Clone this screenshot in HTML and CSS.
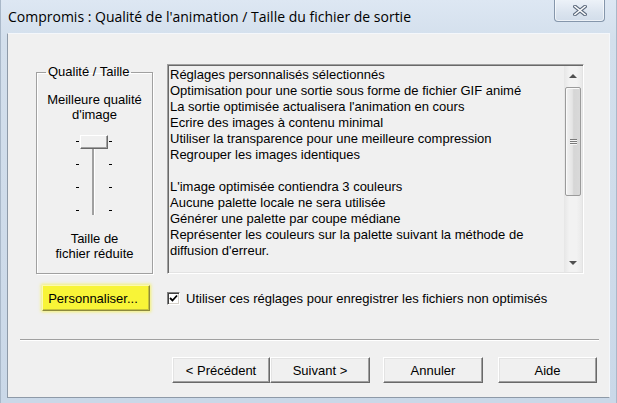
FILE: index.html
```html
<!DOCTYPE html>
<html lang="fr">
<head>
  <meta charset="UTF-8">
  <title>Compromis</title>
  <link rel="stylesheet" href="styles.css">
</head>
<body>
  <div class="window">
    <div class="titlebar">
      <span class="title">Compromis : Qualité de l'animation / Taille du fichier de sortie</span>
      <span class="close">
        <svg width="14" height="11" viewBox="0 0 14 11">
          <path d="M2 1.5 L12 9.5 M12 1.5 L2 9.5" stroke="#5d6b7e" stroke-width="3.6" stroke-linecap="square"/>
          <path d="M2 1.5 L12 9.5 M12 1.5 L2 9.5" stroke="#ffffff" stroke-width="1.6" stroke-linecap="square"/>
        </svg>
      </span>
    </div>

    <div class="client">
      <div class="top">
        <fieldset class="group">
          <legend>Qualité / Taille</legend>
          <p class="slider-label">Meilleure qualité<br>d'image</p>
          <div class="slider">
            <div class="ticks">
              <span></span><span></span><span></span><span></span>
            </div>
            <div class="track"></div>
            <div class="ticks">
              <span></span><span></span><span></span><span></span>
            </div>
            <div class="thumb"></div>
          </div>
          <p class="slider-label bottom">Taille de<br>fichier réduite</p>
        </fieldset>

        <div class="report">
          <div class="report-text">
            <div>Réglages personnalisés sélectionnés</div>
            <div>Optimisation pour une sortie sous forme de fichier GIF animé</div>
            <div>La sortie optimisée actualisera l'animation en cours</div>
            <div>Ecrire des images à contenu minimal</div>
            <div>Utiliser la transparence pour une meilleure compression</div>
            <div>Regrouper les images identiques</div>
            <div>&nbsp;</div>
            <div>L'image optimisée contiendra 3 couleurs</div>
            <div>Aucune palette locale ne sera utilisée</div>
            <div>Générer une palette par coupe médiane</div>
            <div>Représenter les couleurs sur la palette suivant la méthode de</div>
            <div>diffusion d'erreur.</div>
          </div>
          <div class="scrollbar">
            <div class="arrow"><span class="tri up"></span></div>
            <div class="sb-thumb">
              <span class="grip"></span>
            </div>
            <div class="sb-space"></div>
            <div class="arrow"><span class="tri down"></span></div>
          </div>
        </div>
      </div>

      <div class="options">
        <button class="btn btn-custom">Personnaliser...</button>
        <label class="check">
          <span class="box">
            <svg width="9" height="9" viewBox="0 0 9 9">
              <path d="M1 4 L3.5 6.5 L8 1.5" fill="none" stroke="#000" stroke-width="1.8"/>
            </svg>
          </span>
          Utiliser ces réglages pour enregistrer les fichiers non optimisés
        </label>
      </div>

      <div class="sep"></div>

      <div class="actions">
        <button class="btn btn-prev">&lt; Précédent</button>
        <button class="btn btn-next">Suivant &gt;</button>
        <button class="btn btn-cancel">Annuler</button>
        <button class="btn btn-help">Aide</button>
      </div>
    </div>
  </div>
</body>
</html>
```

FILE: styles.css
```css
* {
  box-sizing: border-box;
}

body {
  margin: 0;
  background-color: #cfdcea;
  font-family: 'Liberation Sans', Arial, sans-serif;
  font-size: 13px;
  color: #000000;
}

.window {
  width: 617px;
  height: 403px;
  background: linear-gradient(to bottom, #dde7f3 0px, #d3dfec 40px, #cad8e8 100%);
  border-left: 1px solid #a9b8c9;
  border-right: 1px solid #a9b8c9;
}

.titlebar {
  height: 33px;
  display: flex;
  justify-content: space-between;
  align-items: flex-start;
  padding-left: 7px;
}

.title {
  font-family: 'Open Sans', 'Noto Sans', sans-serif;
  font-size: 14px;
  line-height: 19px;
  margin-top: 7px;
  color: #000000;
}

.close {
  width: 51px;
  height: 23px;
  margin-right: 11px;
  margin-top: -1px;
  border: 1px solid #8596ab;
  border-top: none;
  border-radius: 0 0 4px 4px;
  background: linear-gradient(to bottom, #eef3f9, #dbe4ef 60%, #d2ddea);
  box-shadow: inset 0 0 0 1px rgba(255, 255, 255, 0.6);
  display: flex;
  align-items: center;
  justify-content: center;
}

.client {
  margin-left: 6px;
  width: 603px;
  height: 365px;
  background-color: #f0f0f0;
  border: 1px solid #8e9aa8;
  border-top-color: #f4f7fb;
  border-right-color: #f4f7fb;
}

.top {
  display: flex;
  align-items: flex-start;
  padding-top: 30px;
}

.group {
  margin: 0 0 0 28px;
  padding: 0;
  width: 117px;
  height: 210px;
  border: 1px solid #a0a0a0;
  box-shadow: inset 1px 1px 0 #ffffff, 1px 1px 0 #ffffff;
  display: flex;
  flex-direction: column;
  align-items: center;
}

.group legend {
  margin-left: 9px;
  padding: 0 2px;
  line-height: 16px;
}

.slider-label {
  margin: 12px 0 0;
  line-height: 15px;
  text-align: center;
}

.slider-label.bottom {
  margin-top: 16px;
}

.slider {
  position: relative;
  margin-top: 13px;
  margin-right: 2px;
  width: 36px;
  height: 80px;
  display: flex;
  justify-content: space-between;
}

.ticks {
  display: flex;
  flex-direction: column;
  gap: 22px;
  padding-top: 6px;
}

.ticks span {
  display: block;
  width: 3px;
  height: 1px;
  background-color: #000000;
}

.track {
  margin-top: 7px;
  width: 3px;
  height: 73px;
  background-color: #a0a0a0;
  border-right: 1px solid #ffffff;
}

.thumb {
  position: absolute;
  left: 4px;
  top: 0;
  width: 28px;
  height: 14px;
  background-color: #f0f0f0;
  border: 1px solid;
  border-color: #ffffff #696969 #696969 #ffffff;
  box-shadow: inset -1px -1px 0 #a0a0a0;
}

.report {
  margin-left: 14px;
  width: 417px;
  height: 210px;
  padding: 1px;
  display: flex;
  border: 1px solid;
  border-color: #a0a0a0 #ffffff #ffffff #a0a0a0;
  box-shadow: inset 1px 1px 0 #696969, inset -1px -1px 0 #e3e3e3;
}

.report-text {
  flex: 1;
  padding: 1px 0 0 1px;
  line-height: 16px;
  overflow: hidden;
  white-space: nowrap;
}

.scrollbar {
  width: 18px;
  display: flex;
  flex-direction: column;
  background: linear-gradient(to right, #e6e6e6, #f2f2f2 30%, #f2f2f2 70%, #e9e9e9);
}

.arrow {
  height: 19px;
  display: flex;
  align-items: center;
  justify-content: center;
}

.tri {
  width: 0;
  height: 0;
  border-left: 4px solid transparent;
  border-right: 4px solid transparent;
}

.tri.up {
  border-bottom: 4px solid #505050;
}

.tri.down {
  border-top: 4px solid #505050;
}

.sb-thumb {
  margin: 2px 1px 0;
  height: 109px;
  border: 1px solid #9b9b9b;
  border-radius: 2px;
  background: linear-gradient(to right, #f2f2f2, #e4e4e4 45%, #d6d6d6 55%, #d9d9d9);
  box-shadow: inset 1px 1px 0 #fafafa;
  display: flex;
  align-items: center;
  justify-content: center;
}

.grip {
  width: 7px;
  height: 6px;
  background: repeating-linear-gradient(to bottom, #7a7a7a 0, #7a7a7a 1px, #f6f6f6 1px, #f6f6f6 2px);
}

.sb-space {
  flex: 1;
}

.options {
  margin-top: 11px;
  display: flex;
  align-items: center;
}

.btn {
  height: 26px;
  padding: 0;
  font-family: 'Liberation Sans', Arial, sans-serif;
  font-size: 13px;
  color: #000000;
  background-color: #f0f0f0;
  border: 1px solid;
  border-color: #ffffff #696969 #696969 #ffffff;
  box-shadow: inset -1px -1px 0 #a0a0a0, inset 1px 1px 0 #e3e3e3;
}

.btn-custom {
  margin-left: 34px;
  width: 108px;
  padding-right: 6px;
  background-color: #f8f437;
  border-color: #fbf9b0 #8d8a3c #8d8a3c #fbf9b0;
  box-shadow: inset -1px -1px 0 #c4c03a, 0 0 3px 1px rgba(246, 242, 70, 0.75);
}

.check {
  margin-left: 17px;
  display: flex;
  align-items: center;
  gap: 6px;
}

.box {
  width: 13px;
  height: 13px;
  background-color: #ffffff;
  border: 1px solid;
  border-color: #808080 #ffffff #ffffff #808080;
  box-shadow: inset 1px 1px 0 #404040, inset -1px -1px 0 #d4d0c8;
  display: flex;
  align-items: center;
  justify-content: center;
}

.sep {
  margin: 28px 0 0 12px;
  width: 579px;
  height: 2px;
  border-top: 1px solid #a0a0a0;
  border-bottom: 1px solid #ffffff;
}

.actions {
  margin-top: 16px;
  display: flex;
}

.btn-prev {
  margin-left: 164px;
  width: 98px;
}

.btn-next {
  width: 100px;
}

.btn-cancel {
  margin-left: 13px;
  width: 100px;
}

.btn-help {
  margin-left: 15px;
  width: 99px;
}
```
